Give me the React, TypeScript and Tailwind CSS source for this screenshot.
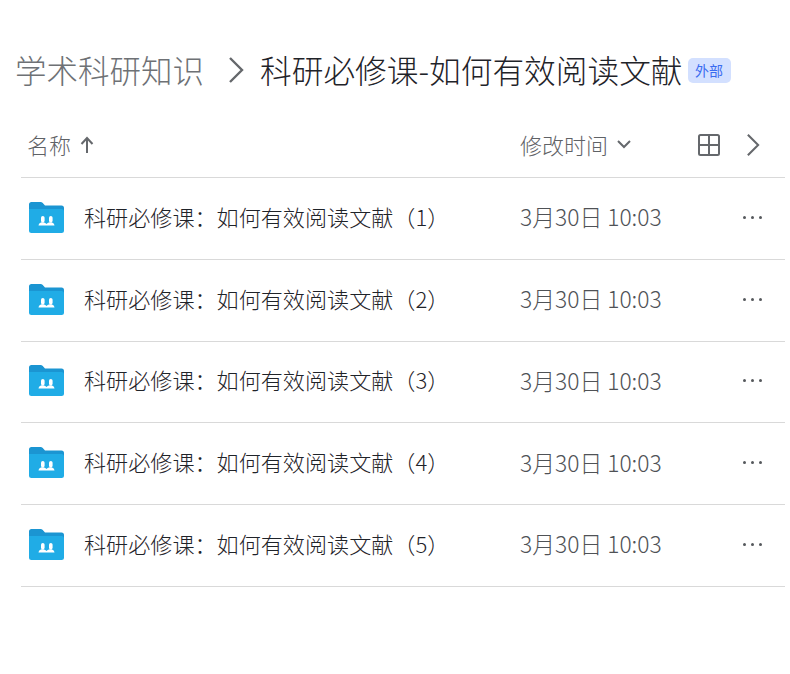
const rows = ['1', '2', '3', '4', '5'];

function SharedFolder() {
  return (
    <svg width="36" height="33" viewBox="0 0 36 33" className="shrink-0">
      <path d="M1 3.500A2.500 2.500 0 0 1 3.500 1h9.200c.7 0 1.300.3 1.800.8L17 4.500h16.500A2.500 2.500 0 0 1 36 7v5H1z" fill="#1b95d2" />
      <path d="M1 8h32.500A2.500 2.500 0 0 1 36 10.500v19a2.500 2.500 0 0 1-2.500 2.500h-30A2.500 2.500 0 0 1 1 29.500z" fill="#20ace6" />
      <rect x="13" y="15" width="3.600" height="6.500" rx="1.800" fill="#fff" />
      <rect x="21" y="15" width="3.600" height="6.500" rx="1.800" fill="#fff" />
      <path d="M10.500 24.500c.3-1.800 1.600-2.800 3-3.200h1.800c.9 0 2 1 3.200 1.600 1.200-.6 2.300-1.600 3.200-1.600h1.800c1.400.4 2.700 1.400 3 3.200z" fill="#fff" />
    </svg>
  );
}

function BigChevron({ className }: { className?: string }) {
  return (
    <svg width="16" height="28" viewBox="0 0 16 28" fill="none" stroke="currentColor" strokeWidth="2.400" className={className}>
      <path d="M2 2l12 12L2 26" />
    </svg>
  );
}

function GridIcon() {
  return (
    <svg width="24" height="24" viewBox="0 0 24 24" fill="none" stroke="#65686c" strokeWidth="2">
      <rect x="2" y="2" width="20" height="20" rx="1.500" />
      <path d="M12 2v20M2 12h20" />
    </svg>
  );
}

export default function App() {
  return (
    <div className="h-[674px] w-[790px] bg-white pr-[5px] pt-[50px] font-['Noto_Sans_CJK_SC','Liberation_Sans',sans-serif]">
      <div className="flex h-[40px] items-center pl-[15px] text-[31.5px] font-light leading-none">
        <span className="text-[#6e7175]">学术科研知识</span>
        <BigChevron className="ml-[24px] mr-[16px] text-[#65686c]" />
        <span className="text-[31.7px] text-[#1f2329]">科研必修课-如何有效阅读文献</span>
        <span className="ml-[5px] flex h-[25px] w-[43px] items-center justify-center rounded-[5px] bg-[#d3e0ff] text-[14px] font-normal text-[#3a6cf0]">
          外部
        </span>
      </div>

      <div className="ml-[21px] mt-[2px] flex h-[86px] items-center border-b border-[#d9d9d9] pt-[20px]">
        <div className="flex flex-1 items-center pl-[6px] text-[22px] font-light text-[#5f6266]">
          名称
          <svg width="14" height="18" viewBox="0 0 14 18" fill="none" stroke="#65686c" strokeWidth="2" className="ml-[9px]">
            <path d="M7 17V2M1.500 8L7 2l5.500 6" />
          </svg>
        </div>
        <div className="flex w-[265px] items-center text-[22px] font-light text-[#5f6266]">
          修改时间
          <svg width="16" height="9" viewBox="0 0 16 9" fill="none" stroke="#65686c" strokeWidth="2" className="ml-[8px]">
            <path d="M2 1l6 6 6-6" />
          </svg>
          <div className="ml-[65px] flex items-center gap-[25px]">
            <GridIcon />
            <BigChevron className="h-[24px] w-[14px] text-[#65686c]" />
          </div>
        </div>
      </div>

      {rows.map((n) => (
        <div key={n} className="ml-[21px] flex h-[81.75px] items-center border-b border-[#d9d9d9] pl-[7px]">
          <div className="-mt-[2px] flex">
            <SharedFolder />
          </div>
          <span className="-mt-[4px] ml-[20px] flex-1 text-[22.1px] font-light text-[#1f2329]">
            {`科研必修课\uFF1A如何有效阅读文献\uFF08${n}\uFF09`}
          </span>
          <span className="-mt-[2px] w-[223px] text-[22.8px] font-light text-[#4f5256]">3月30日 10:03</span>
          <div className="-mt-[2px] mr-[23px] flex gap-[5px]">
            <i className="h-[3px] w-[3px] rounded-full bg-[#55585c]" />
            <i className="h-[3px] w-[3px] rounded-full bg-[#55585c]" />
            <i className="h-[3px] w-[3px] rounded-full bg-[#55585c]" />
          </div>
        </div>
      ))}
    </div>
  );
}
